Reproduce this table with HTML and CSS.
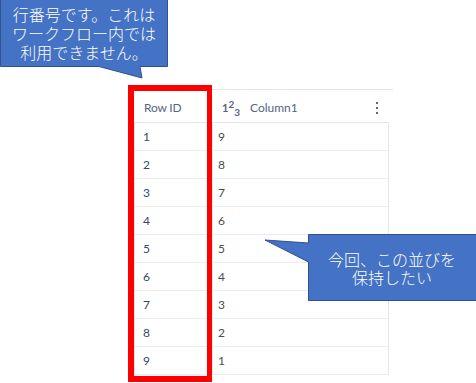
FILE: index.html
```html
<!DOCTYPE html>
<html lang="ja">
<head>
<meta charset="utf-8">
<link rel="stylesheet" href="styles.css">
</head>
<body>
<div class="canvas">
  <div class="grid">
    <div class="head">
      <div class="hcell hid">Row ID</div>
      <div class="hcell hcol">
        <span class="type">1<span class="sup">2</span><span class="sub">3</span></span>
        <span class="name">Column1</span>
        <span class="kebab"><i></i><i></i><i></i></span>
      </div>
    </div>
    <div class="rows">
      <div class="row"><div class="cell id">1</div><div class="cell val">9</div></div>
      <div class="row"><div class="cell id">2</div><div class="cell val">8</div></div>
      <div class="row"><div class="cell id">3</div><div class="cell val">7</div></div>
      <div class="row"><div class="cell id">4</div><div class="cell val">6</div></div>
      <div class="row"><div class="cell id">5</div><div class="cell val">5</div></div>
      <div class="row"><div class="cell id">6</div><div class="cell val">4</div></div>
      <div class="row"><div class="cell id">7</div><div class="cell val">3</div></div>
      <div class="row"><div class="cell id">8</div><div class="cell val">2</div></div>
      <div class="row"><div class="cell id">9</div><div class="cell val">1</div></div>
    </div>
  </div>

  <div class="highlight"></div>

  <div class="callout c1">
    <svg class="shape" width="170" height="80" viewBox="0 0 170 80">
      <path d="M0.5 -1 H167.5 V66.5 H140 L142 78 L99 66.5 H0.5 Z" fill="#4472c4" stroke="#2f528f" stroke-width="1"/>
    </svg>
    <div class="text t1">行番号です。これは<br>ワークフロー内では<br>利用できません。</div>
  </div>

  <div class="callout c2">
    <svg class="shape" width="214" height="70" viewBox="0 0 214 70">
      <path d="M44.5 1.5 H215 V67.5 H44.5 V29 L1 7 L44.5 10 Z" fill="#4472c4" stroke="#2f528f" stroke-width="1"/>
    </svg>
    <div class="text t2">今回、この並びを<br>保持したい</div>
  </div>
</div>
</body>
</html>
```
FILE: styles.css
```css
html, body {
  margin: 0;
  padding: 0;
  background: #ffffff;
}

.canvas {
  position: relative;
  width: 476px;
  height: 383px;
  overflow: hidden;
  font-family: Lato, "Liberation Sans", sans-serif;
}

.grid {
  margin: 89px 0 0 134px;
  width: 255px;
}

.head {
  display: flex;
  height: 32px;
  border-top: 1px solid #e6e7ee;
  margin-right: -4px;
  font-size: 12px;
  color: #56667f;
}

.hcell {
  display: flex;
  align-items: center;
  padding-top: 3px;
  box-sizing: border-box;
}

.hid {
  width: 79px;
  padding-left: 10px;
  letter-spacing: -0.2px;
}

.hcol {
  flex: 1;
  padding-left: 9px;
}

.type {
  font-size: 11px;
  font-weight: 700;
  color: #56667f;
  width: 28px;
  display: inline-flex;
  align-items: baseline;
}

.type .sup {
  font-size: 10px;
  display: inline-block;
  transform: translateY(-4px);
}

.type .sub {
  font-size: 10px;
  display: inline-block;
  transform: translateY(4px);
}

.name {
  flex: 1;
}

.kebab {
  display: flex;
  flex-direction: column;
  gap: 3px;
  margin-right: 15px;
}

.kebab i {
  display: block;
  width: 2px;
  height: 2px;
  background: #5b6a87;
}

.rows {
  border: 1px solid #e6e7ee;
  border-bottom: none;
}

.row {
  display: flex;
  height: 27px;
  border-bottom: 1px solid #ebebf2;
  font-size: 12px;
}

.cell {
  display: flex;
  align-items: center;
  box-sizing: border-box;
}

.cell.id {
  width: 78px;
  padding-left: 8px;
  border-right: 1px solid #ebebf2;
  color: #34496a;
}

.cell.val {
  flex: 1;
  padding-left: 5px;
  color: #4d4d4d;
}

.highlight {
  position: absolute;
  left: 128px;
  top: 85px;
  width: 84px;
  height: 297px;
  box-sizing: border-box;
  border-style: solid;
  border-color: #ff0000;
  border-width: 6px 5px 6px 6px;
}

.callout {
  position: absolute;
}

.callout .shape {
  position: absolute;
  left: 0;
  top: 0;
}

.c1 {
  left: 0;
  top: 0;
  width: 170px;
  height: 80px;
}

.c2 {
  left: 264px;
  top: 233px;
  width: 214px;
  height: 70px;
}

.text {
  position: relative;
  display: flex;
  align-items: center;
  justify-content: center;
  text-align: center;
  color: #ffffff;
  font-family: "Noto Sans CJK JP", "Noto Sans", sans-serif;
  font-size: 16px;
  font-weight: 300;
  line-height: 19px;
}

.t1 {
  width: 168px;
  height: 67px;
}

.t2 {
  margin-left: 44px;
  margin-top: 1px;
  width: 168px;
  height: 67px;
  line-height: 18px;
}
```
